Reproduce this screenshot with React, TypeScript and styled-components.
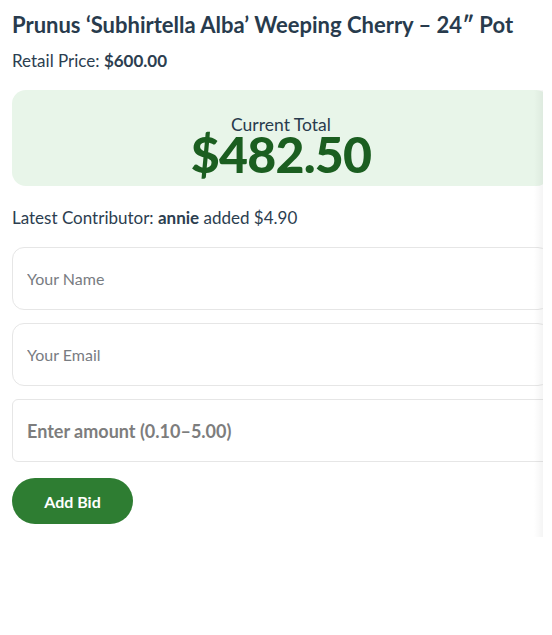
import React from 'react'
import styled, { createGlobalStyle } from 'styled-components'

const GlobalStyle = createGlobalStyle`
    html, body {
        margin: 0;
        padding: 0;
        background: #ffffff;
        font-family: 'Lato', 'Liberation Sans', sans-serif;
        color: #2c3e50;
    }
`

const Page = styled.div`
    width: 552px;
    padding-top: 11px;
`

const Header = styled.header`
    padding: 0 12px;
`

const Title = styled.h1`
    margin: 0;
    font-size: 22px;
    font-weight: 700;
    line-height: 28px;
    color: #283b4d;
`

const Retail = styled.p`
    margin: 11px 0 0;
    font-size: 17px;
    line-height: 22px;
    b { font-weight: 700; }
`

const Clip = styled.div`
    position: relative;
    width: 531px;
    margin-top: 18px;
    padding-left: 12px;
    overflow: hidden;
    &::after {
        content: '';
        position: absolute;
        top: 0;
        right: 0;
        bottom: 0;
        width: 9px;
        background: linear-gradient(to right, rgba(0,0,0,0), rgba(0,0,0,0.045));
        pointer-events: none;
    }
`

const Inner = styled.div`
    width: 538px;
    padding-bottom: 13px;
`

const TotalBox = styled.section`
    background: #e8f5e9;
    border-radius: 14px;
    height: 96px;
    display: flex;
    flex-direction: column;
    align-items: center;
    justify-content: center;
`

const TotalLabel = styled.div`
    font-size: 17.5px;
    line-height: 17px;
    margin-top: 14px;
    color: #283b4d;
`

const TotalValue = styled.div`
    font-size: 50px;
    font-weight: 900;
    line-height: 42px;
    color: #1b5e20;
    letter-spacing: -0.8px;
`

const Latest = styled.p`
    margin: 21px 0 18px;
    font-size: 17px;
    line-height: 22px;
    b { font-weight: 700; }
`

const Form = styled.form`
    display: flex;
    flex-direction: column;
    gap: 13px;
`

const Field = styled.input<{ $big?: boolean }>`
    box-sizing: border-box;
    width: 100%;
    height: 63px;
    border: 1px solid #e6e6e6;
    border-radius: ${p => p.$big ? '6px' : '12px'};
    padding: 0 14px;
    font-family: 'Lato', 'Liberation Sans', sans-serif;
    font-size: ${p => p.$big ? '18px' : '16px'};
    font-weight: ${p => p.$big ? 700 : 400};
    outline: none;
    &::placeholder {
        color: ${p => p.$big ? '#7d7d7d' : '#787c82'};
    }
`

const Button = styled.button`
    align-self: flex-start;
    margin-top: 3px;
    width: 121px;
    height: 46px;
    border: none;
    border-radius: 23px;
    background: #2e7d32;
    color: #ffffff;
    font-family: 'Lato', 'Liberation Sans', sans-serif;
    font-size: 16px;
    font-weight: 700;
    cursor: pointer;
`

export default function App() {
    return (
        <Page>
            <GlobalStyle />
            <Header>
                <Title>Prunus ‘Subhirtella Alba’ Weeping Cherry – 24″ Pot</Title>
                <Retail>Retail Price: <b>$600.00</b></Retail>
            </Header>
            <Clip>
                <Inner>
                    <TotalBox>
                        <TotalLabel>Current Total</TotalLabel>
                        <TotalValue>$482.50</TotalValue>
                    </TotalBox>
                    <Latest>Latest Contributor: <b>annie</b> added $4.90</Latest>
                    <Form onSubmit={e => e.preventDefault()}>
                        <Field placeholder="Your Name" />
                        <Field placeholder="Your Email" />
                        <Field $big placeholder="Enter amount (0.10–5.00)" />
                        <Button type="submit">Add Bid</Button>
                    </Form>
                </Inner>
            </Clip>
        </Page>
    )
}
